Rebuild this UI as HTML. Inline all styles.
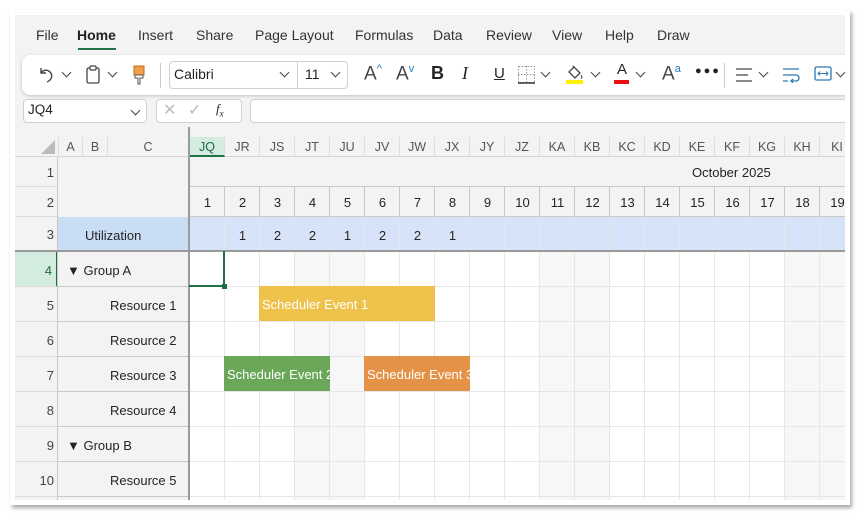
<!DOCTYPE html>
<html><head><meta charset="utf-8"><style>
*{box-sizing:border-box;margin:0;padding:0}
body{width:860px;height:516px;background:#fff;position:relative;overflow:hidden;font-family:"Segoe UI","Liberation Sans",sans-serif;color:#242424}
.frame{position:absolute;left:10px;top:10px;width:840px;height:495px;background:#fff;box-shadow:2px 3px 4px rgba(0,0,0,.35)}
.clip{position:absolute;left:15px;top:15px;width:830px;height:485px;overflow:hidden;background:#f3f3f3}
.a{position:absolute}
.tab{position:absolute;top:12px;font-size:14px;color:#333}
.rb{position:absolute;left:7px;top:40px;width:840px;height:40px;background:#fff;border-radius:8px;box-shadow:0 1px 3px rgba(0,0,0,.2)}
.chev{position:absolute;width:7px;height:7px;border-right:1.3px solid #444;border-bottom:1.3px solid #444;transform:rotate(45deg)}
.box{position:absolute;background:#fff;border:1px solid #d0d0d0;border-radius:4px}
.ch{position:absolute;top:122px;height:20px;font-size:12.5px;color:#555;text-align:center;line-height:20px;border-right:1px solid #ddd}
.rn{position:absolute;left:0;width:43px;text-align:right;padding-right:4px;font-size:13px;color:#444;border-bottom:1px solid #dcdcdc}
.c{position:absolute;font-size:13px;text-align:center}
.vl{position:absolute;width:1px;background:#e6e6e6}
.hl{position:absolute;height:1px;background:#e6e6e6}
.ev{position:absolute;height:35px;color:#fff;font-size:13px;line-height:37px;padding-left:3px;white-space:nowrap;overflow:hidden}
</style></head><body>
<div class="frame"></div>
<div class="clip">
<div class="tab" style="left:21px">File</div>
<div class="tab" style="left:62px;font-weight:bold;color:#222">Home</div>
<div class="a" style="left:63px;top:33px;width:38px;height:2px;background:#1e7145"></div>
<div class="tab" style="left:123px">Insert</div>
<div class="tab" style="left:181px">Share</div>
<div class="tab" style="left:240px">Page Layout</div>
<div class="tab" style="left:340px">Formulas</div>
<div class="tab" style="left:418px">Data</div>
<div class="tab" style="left:471px">Review</div>
<div class="tab" style="left:537px">View</div>
<div class="tab" style="left:590px">Help</div>
<div class="tab" style="left:642px">Draw</div>
<div class="rb">
<svg class="a" style="left:14px;top:10px" width="20" height="20" viewBox="0 0 20 20"><path d="M5 3v5h5M5 8c2-3 6-4 9-1s2 8-3 10" fill="none" stroke="#444" stroke-width="1.4"/></svg>
<div class="chev" style="left:41px;top:14px"></div>
<svg class="a" style="left:63px;top:9px" width="16" height="22" viewBox="0 0 16 22"><rect x="2" y="4" width="12" height="15" rx="1.5" fill="none" stroke="#444" stroke-width="1.3"/><rect x="5" y="2" width="6" height="4" rx="1" fill="#fff" stroke="#444" stroke-width="1.2"/></svg>
<div class="chev" style="left:87px;top:14px"></div>
<svg class="a" style="left:110px;top:10px" width="14" height="20" viewBox="0 0 14 20"><rect x="2" y="1" width="10" height="9" fill="#f0a04b" stroke="#c46a12"/><path d="M3 10h8v3H8v6H6v-6H3z" fill="#fff" stroke="#555"/></svg>
<div class="a" style="left:138px;top:8px;width:1px;height:25px;background:#ccc"></div>
<div class="box" style="left:147px;top:6px;width:179px;height:28px"></div>
<div class="a" style="left:152px;top:11px;font-size:14px;font-family:'Liberation Sans',sans-serif">Calibri</div>
<div class="chev" style="left:259px;top:14px"></div>
<div class="a" style="left:275px;top:6px;width:1px;height:28px;background:#d0d0d0"></div>
<div class="a" style="left:283px;top:11px;font-size:14px">11</div>
<div class="chev" style="left:310px;top:14px"></div>
<div class="a" style="left:342px;top:8px;font-size:19px;color:#444">A<sup style="font-size:11px;color:#2a7ab8">^</sup></div>
<div class="a" style="left:374px;top:8px;font-size:19px;color:#444">A<sup style="font-size:11px;color:#2a7ab8">v</sup></div>
<div class="a" style="left:409px;top:8px;font-size:18px;font-weight:bold">B</div>
<div class="a" style="left:440px;top:8px;font-size:18px;font-style:italic;font-family:'Liberation Serif',serif">I</div>
<div class="a" style="left:472px;top:10px;font-size:15px;text-decoration:underline">U</div>
<svg class="a" style="left:495px;top:10px" width="20" height="20" viewBox="0 0 20 20"><rect x="1.5" y="1.5" width="16" height="16" fill="none" stroke="#999" stroke-dasharray="1.5 1.5"/><path d="M9.5 1v17M1 9.5h17" stroke="#999" stroke-dasharray="1.5 1.5"/><path d="M1 18h17" stroke="#333" stroke-width="1.5"/></svg>
<div class="chev" style="left:520px;top:14px"></div>
<svg class="a" style="left:543px;top:8px" width="20" height="22" viewBox="0 0 20 22"><path d="M4 9l5-5 6 6-5 5z M8 3l2 2" fill="none" stroke="#444" stroke-width="1.3"/><path d="M16 12c1 2 1.5 3 0 3.5" stroke="#444" fill="none"/><rect x="1" y="17" width="17" height="4" fill="#fff200"/></svg>
<div class="chev" style="left:570px;top:14px"></div>
<div class="a" style="left:595px;top:6px;font-size:15px">A</div>
<div class="a" style="left:592px;top:25px;width:15px;height:4px;background:#e81010"></div>
<div class="chev" style="left:615px;top:14px"></div>
<div class="a" style="left:640px;top:8px;font-size:19px;color:#444">A<sup style="font-size:11px;color:#2a7ab8">a</sup></div>
<div class="a" style="left:673px;top:10px;font-size:11px;font-weight:bold;letter-spacing:2px">●●●</div>
<div class="a" style="left:702px;top:8px;width:1px;height:25px;background:#ccc"></div>
<svg class="a" style="left:713px;top:12px" width="18" height="16" viewBox="0 0 18 16"><path d="M1 2h16M1 8h12M1 14h16" stroke="#444" stroke-width="1.3"/></svg>
<div class="chev" style="left:738px;top:14px"></div>
<svg class="a" style="left:760px;top:12px" width="18" height="16" viewBox="0 0 18 16"><path d="M1 2h16M1 8h13a3 3 0 0 1 0 6h-5M11 12l-2 2 2 2M1 14h5" stroke="#2a7ab8" stroke-width="1.3" fill="none"/></svg>
<svg class="a" style="left:792px;top:10px" width="18" height="18" viewBox="0 0 18 18"><rect x="1" y="2" width="16" height="13" rx="1.5" fill="none" stroke="#2a7ab8" stroke-width="1.3"/><path d="M4 8.5h10M6 6.5l-2 2 2 2M12 6.5l2 2-2 2" stroke="#2a7ab8" fill="none"/></svg>
<div class="chev" style="left:815px;top:14px"></div>
</div>
<div class="box" style="left:8px;top:84px;width:124px;height:24px"></div>
<div class="a" style="left:13px;top:87px;font-size:13.5px">JQ4</div>
<div class="chev" style="left:117px;top:92px"></div>
<div class="box" style="left:141px;top:84px;width:86px;height:24px"></div>
<div class="a" style="left:148px;top:85px;font-size:16px;color:#bbb">✕</div>
<div class="a" style="left:173px;top:85px;font-size:16px;color:#bbb">✓</div>
<div class="a" style="left:201px;top:86px;font-size:13px;font-style:italic;font-family:'Liberation Serif',serif">f<sub style="font-size:9px">x</sub></div>
<div class="box" style="left:235px;top:84px;width:600px;height:24px"></div>
<svg class="a" style="left:26px;top:125px" width="14" height="14"><path d="M14 0V14H0z" fill="#bbb"/></svg>
<div class="a" style="left:0;top:141px;width:830px;height:1px;background:#d6d6d6"></div>
<div class="ch" style="left:43px;width:25px;border-left:1px solid #ddd">A</div>
<div class="ch" style="left:68px;width:25px">B</div>
<div class="ch" style="left:93px;width:81px">C</div>
<div class="ch" style="left:175px;width:35px;background:#d3ecdf;color:#1e6b3f;border-bottom:2px solid #1e7145">JQ</div>
<div class="ch" style="left:210px;width:35px">JR</div>
<div class="ch" style="left:245px;width:35px">JS</div>
<div class="ch" style="left:280px;width:35px">JT</div>
<div class="ch" style="left:315px;width:35px">JU</div>
<div class="ch" style="left:350px;width:35px">JV</div>
<div class="ch" style="left:385px;width:35px">JW</div>
<div class="ch" style="left:420px;width:35px">JX</div>
<div class="ch" style="left:455px;width:35px">JY</div>
<div class="ch" style="left:490px;width:35px">JZ</div>
<div class="ch" style="left:525px;width:35px">KA</div>
<div class="ch" style="left:560px;width:35px">KB</div>
<div class="ch" style="left:595px;width:35px">KC</div>
<div class="ch" style="left:630px;width:35px">KD</div>
<div class="ch" style="left:665px;width:35px">KE</div>
<div class="ch" style="left:700px;width:35px">KF</div>
<div class="ch" style="left:735px;width:35px">KG</div>
<div class="ch" style="left:770px;width:35px">KH</div>
<div class="ch" style="left:805px;width:35px">KI</div>
<div class="rn" style="top:142px;height:30px;line-height:32px">1</div>
<div class="rn" style="top:172px;height:30px;line-height:32px">2</div>
<div class="rn" style="top:202px;height:34px;line-height:36px">3</div>
<div class="rn" style="top:237px;height:35px;line-height:37px;background:#d3ecdf;color:#1e6b3f;border-right:2px solid #1e7145">4</div>
<div class="rn" style="top:272px;height:35px;line-height:37px">5</div>
<div class="rn" style="top:307px;height:35px;line-height:37px">6</div>
<div class="rn" style="top:342px;height:35px;line-height:37px">7</div>
<div class="rn" style="top:377px;height:35px;line-height:37px">8</div>
<div class="rn" style="top:412px;height:35px;line-height:37px">9</div>
<div class="rn" style="top:447px;height:35px;line-height:37px">10</div>
<div class="a" style="left:42px;top:142px;width:1px;height:343px;background:#c8c8c8"></div>
<div class="a" style="left:175px;top:142px;width:655px;height:60px;background:#f3f3f3"></div>
<div class="a" style="left:677px;top:150px;font-size:13px">October 2025</div>
<div class="a" style="left:175px;top:171px;width:655px;height:1px;background:#c8c8c8"></div>
<div class="a" style="left:175px;top:172px;width:655px;height:30px;font-size:13px;line-height:32px;white-space:nowrap">
<span class="c" style="left:0;width:35px">1</span><span class="c" style="left:35px;width:35px">2</span><span class="c" style="left:70px;width:35px">3</span><span class="c" style="left:105px;width:35px">4</span><span class="c" style="left:140px;width:35px">5</span><span class="c" style="left:175px;width:35px">6</span><span class="c" style="left:210px;width:35px">7</span><span class="c" style="left:245px;width:35px">8</span><span class="c" style="left:280px;width:35px">9</span><span class="c" style="left:315px;width:35px">10</span><span class="c" style="left:350px;width:35px">11</span><span class="c" style="left:385px;width:35px">12</span><span class="c" style="left:420px;width:35px">13</span><span class="c" style="left:455px;width:35px">14</span><span class="c" style="left:490px;width:35px">15</span><span class="c" style="left:525px;width:35px">16</span><span class="c" style="left:560px;width:35px">17</span><span class="c" style="left:595px;width:35px">18</span><span class="c" style="left:630px;width:35px">19</span>
</div>
<div class="a" style="left:43px;top:202px;width:131px;height:34px;background:#c9ddf5"></div>
<div class="a" style="left:70px;top:213px;font-size:13px">Utilization</div>
<div class="a" style="left:175px;top:202px;width:655px;height:34px;background:#d6e3f8;font-size:13px;line-height:37px">
<span class="c" style="left:35px;width:35px">1</span><span class="c" style="left:70px;width:35px">2</span><span class="c" style="left:105px;width:35px">2</span><span class="c" style="left:140px;width:35px">1</span><span class="c" style="left:175px;width:35px">2</span><span class="c" style="left:210px;width:35px">2</span><span class="c" style="left:245px;width:35px">1</span>
</div>
<div class="a" style="left:175px;top:237px;width:655px;height:248px;background:#fff"></div>
<div class="a" style="left:280px;top:237px;width:70px;height:248px;background:#f7f7f7"></div>
<div class="a" style="left:525px;top:237px;width:70px;height:248px;background:#f7f7f7"></div>
<div class="a" style="left:770px;top:237px;width:70px;height:248px;background:#f7f7f7"></div>
<div class="vl" style="left:209px;top:172px;height:313px"></div><div class="vl" style="left:244px;top:172px;height:313px"></div><div class="vl" style="left:279px;top:172px;height:313px"></div><div class="vl" style="left:314px;top:172px;height:313px"></div><div class="vl" style="left:349px;top:172px;height:313px"></div><div class="vl" style="left:384px;top:172px;height:313px"></div><div class="vl" style="left:419px;top:172px;height:313px"></div><div class="vl" style="left:454px;top:172px;height:313px"></div><div class="vl" style="left:489px;top:172px;height:313px"></div><div class="vl" style="left:524px;top:172px;height:313px"></div><div class="vl" style="left:559px;top:172px;height:313px"></div><div class="vl" style="left:594px;top:172px;height:313px"></div><div class="vl" style="left:629px;top:172px;height:313px"></div><div class="vl" style="left:664px;top:172px;height:313px"></div><div class="vl" style="left:699px;top:172px;height:313px"></div><div class="vl" style="left:734px;top:172px;height:313px"></div><div class="vl" style="left:769px;top:172px;height:313px"></div><div class="vl" style="left:804px;top:172px;height:313px"></div>
<div class="a" style="left:175px;top:172px;width:655px;height:30px;background:repeating-linear-gradient(90deg,transparent 0 34px,#c8c8c8 34px 35px)"></div>
<div class="a" style="left:175px;top:201px;width:655px;height:1px;background:#c8c8c8"></div>
<div class="hl" style="left:175px;top:271px;width:655px"></div><div class="hl" style="left:175px;top:306px;width:655px"></div><div class="hl" style="left:175px;top:341px;width:655px"></div><div class="hl" style="left:175px;top:376px;width:655px"></div><div class="hl" style="left:175px;top:411px;width:655px"></div><div class="hl" style="left:175px;top:446px;width:655px"></div><div class="hl" style="left:175px;top:481px;width:655px"></div>
<div class="a" style="left:43px;top:237px;width:131px;height:248px;background:#f3f3f3"></div>
<div class="a" style="left:43px;top:271px;width:131px;height:1px;background:#c8c8c8"></div>
<div class="a" style="left:43px;top:306px;width:131px;height:1px;background:#c8c8c8"></div>
<div class="a" style="left:43px;top:341px;width:131px;height:1px;background:#c8c8c8"></div>
<div class="a" style="left:43px;top:376px;width:131px;height:1px;background:#c8c8c8"></div>
<div class="a" style="left:43px;top:411px;width:131px;height:1px;background:#c8c8c8"></div>
<div class="a" style="left:43px;top:446px;width:131px;height:1px;background:#c8c8c8"></div>
<div class="a" style="left:43px;top:481px;width:131px;height:1px;background:#c8c8c8"></div>
<div class="a" style="left:52px;top:248px;font-size:13px">▼ Group A</div>
<div class="a" style="left:95px;top:283px;font-size:13px">Resource 1</div>
<div class="a" style="left:95px;top:318px;font-size:13px">Resource 2</div>
<div class="a" style="left:95px;top:353px;font-size:13px">Resource 3</div>
<div class="a" style="left:95px;top:388px;font-size:13px">Resource 4</div>
<div class="a" style="left:52px;top:423px;font-size:13px">▼ Group B</div>
<div class="a" style="left:95px;top:458px;font-size:13px">Resource 5</div>
<div class="a" style="left:0;top:235px;width:830px;height:2px;background:#9a9a9a"></div>
<div class="a" style="left:173px;top:112px;width:2px;height:373px;background:#9a9a9a"></div>
<div class="a" style="left:174px;top:236px;width:36px;height:36px;border-right:2px solid #1e7145;border-bottom:2px solid #1e7145"></div>
<div class="a" style="left:207px;top:269px;width:5px;height:5px;background:#1e7145"></div>
<div class="ev" style="left:244px;top:271px;width:176px;background:#efc24b">Scheduler Event 1</div>
<div class="ev" style="left:209px;top:341px;width:106px;background:#6aa758">Scheduler Event 2</div>
<div class="ev" style="left:349px;top:341px;width:106px;background:#e39246">Scheduler Event 3</div>
</div>
</body></html>
